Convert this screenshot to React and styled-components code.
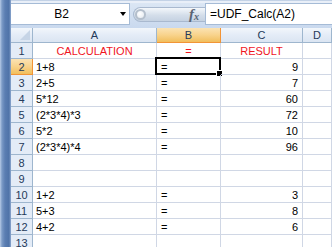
import React from 'react';
import styled, { createGlobalStyle } from 'styled-components';

const GlobalStyle = createGlobalStyle`
  html, body {
    margin: 0;
    padding: 0;
    background: #ffffff;
  }
  body {
    font-family: "Liberation Sans", Arial, sans-serif;
  }
`;

const COLS = ['A', 'B', 'C', 'D'];

const rows = [
  { a: 'CALCULATION', b: '=', c: 'RESULT', title: true },
  { a: '1+8', b: '=', c: '9' },
  { a: '2+5', b: '=', c: '7' },
  { a: '5*12', b: '=', c: '60' },
  { a: '(2*3*4)*3', b: '=', c: '72' },
  { a: '5*2', b: '=', c: '10' },
  { a: '(2*3*4)*4', b: '=', c: '96' },
  { a: '', b: '', c: '' },
  { a: '', b: '', c: '' },
  { a: '1+2', b: '=', c: '3' },
  { a: '5+3', b: '=', c: '8' },
  { a: '4+2', b: '=', c: '6' },
  { a: '', b: '', c: '' },
];

const App = () => {
  return (
    <>
      <GlobalStyle />
      <Window>
        <Frame />
        <Main>
          <FormulaBar>
            <NameBox>
              <NameText>B2</NameText>
              <DropArrow />
            </NameBox>
            <FxPill>
              <Knob />
              <Fx>
                f<sub>x</sub>
              </Fx>
            </FxPill>
            <FormulaInput>=UDF_Calc(A2)</FormulaInput>
          </FormulaBar>
          <Sheet>
            <Corner>
              <CornerTri />
            </Corner>
            {COLS.map((c) => (
              <ColHead key={c} active={c === 'B'}>
                {c}
              </ColHead>
            ))}
            {rows.map((r, i) => {
              const n = i + 1;
              return (
                <React.Fragment key={n}>
                  <RowHead active={n === 2}>{n}</RowHead>
                  <Cell align={r.title ? 'center' : 'left'} red={r.title}>
                    {r.a}
                  </Cell>
                  <Cell align={r.title ? 'center' : 'left'} red={r.title} pad="4px">
                    {r.b}
                    {n === 2 && (
                      <Selection>
                        <Handle />
                      </Selection>
                    )}
                  </Cell>
                  <Cell align={r.title ? 'center' : 'right'} red={r.title}>
                    {r.c}
                  </Cell>
                  <Cell />
                </React.Fragment>
              );
            })}
          </Sheet>
        </Main>
      </Window>
    </>
  );
};

const Window = styled.div`
  width: 332px;
  height: 247px;
  display: flex;
  overflow: hidden;
  background: #ffffff;
`;

const Frame = styled.div`
  width: 11px;
  flex-shrink: 0;
  background: linear-gradient(
    to right,
    #b7cbe6 0px,
    #7b9ac6 2px,
    #5b7eb2 5px,
    #4f73a8 9px,
    #8ea9d0 11px
  );
`;

const Main = styled.div`
  flex: 1;
  display: flex;
  flex-direction: column;
  min-width: 0;
`;

const FormulaBar = styled.div`
  height: 28px;
  box-sizing: border-box;
  padding: 2px 0 3px 0;
  display: flex;
  align-items: stretch;
  background: linear-gradient(to bottom, #e9eff8 0, #e9eff8 2px, #dbe6f4 2px, #c9d9ee 100%);
  border-top: 1px solid #c3d2e6;
`;

const NameBox = styled.div`
  width: 119px;
  box-sizing: border-box;
  background: #ffffff;
  border: 1px solid #a5bbd6;
  border-left: none;
  display: flex;
  align-items: center;
  position: relative;
`;

const NameText = styled.span`
  flex: 1;
  text-align: center;
  font-size: 12px;
  color: #000;
  padding-right: 8px;
`;

const DropArrow = styled.span`
  width: 0;
  height: 0;
  margin-right: 3px;
  border-left: 3.5px solid transparent;
  border-right: 3.5px solid transparent;
  border-top: 4px solid #000;
`;

const FxPill = styled.div`
  width: 72px;
  margin: 4px 0 3px 3px;
  box-sizing: border-box;
  border: 1px solid #a9b9cf;
  border-right: none;
  border-radius: 8px 0 0 8px;
  background: linear-gradient(to bottom, #f4f7fb, #d4deea 55%, #c5d2e2);
  display: flex;
  align-items: center;
`;

const Knob = styled.div`
  width: 11px;
  height: 11px;
  margin-left: 1px;
  border-radius: 50%;
  box-sizing: border-box;
  border: 2px solid #b4bfcc;
  background: radial-gradient(circle at 40% 40%, #ffffff, #e2e8ef);
`;

const Fx = styled.span`
  margin-left: auto;
  margin-right: 6px;
  font-family: "Liberation Serif", "Times New Roman", serif;
  font-style: italic;
  font-weight: bold;
  font-size: 15px;
  color: #5a6473;
  line-height: 1;

  sub {
    font-size: 10px;
    vertical-align: -1px;
  }
`;

const FormulaInput = styled.div`
  flex: 1;
  background: #ffffff;
  border: 1px solid #a5bbd6;
  border-right: none;
  display: flex;
  align-items: center;
  padding-left: 4px;
  font-size: 12px;
  color: #000;
  white-space: nowrap;
`;

const Sheet = styled.div`
  display: grid;
  grid-template-columns: 22px 124px 64px 82px 1fr;
  grid-template-rows: 15px repeat(13, 16px);
  font-size: 11px;
`;

const headBg = `linear-gradient(to bottom, #f2f6fb, #e4ecf7 50%, #dbe5f2)`;
const activeBg = `linear-gradient(to bottom, #fbe3b4, #f8d38c 50%, #f1be5c)`;

const Corner = styled.div`
  box-sizing: border-box;
  background: ${headBg};
  border-right: 1px solid #9eb6ce;
  border-bottom: 1px solid #9eb6ce;
  position: relative;
`;

const CornerTri = styled.div`
  position: absolute;
  right: 2px;
  bottom: 2px;
  width: 0;
  height: 0;
  border-left: 10px solid transparent;
  border-bottom: 10px solid #c6d4e6;
`;

const ColHead = styled.div`
  box-sizing: border-box;
  display: flex;
  align-items: center;
  justify-content: center;
  background: ${(p) => (p.active ? activeBg : headBg)};
  border-right: 1px solid ${(p) => (p.active ? '#f29436' : '#9eb6ce')};
  border-bottom: 1px solid ${(p) => (p.active ? '#f29436' : '#9eb6ce')};
  color: #243a5a;
`;

const RowHead = styled.div`
  box-sizing: border-box;
  display: flex;
  align-items: center;
  justify-content: center;
  background: ${(p) => (p.active ? activeBg : '#e4ecf7')};
  border-right: 1px solid ${(p) => (p.active ? '#f29436' : '#9eb6ce')};
  border-bottom: 1px solid ${(p) => (p.active ? '#f29436' : '#9eb6ce')};
  color: #243a5a;
`;

const Cell = styled.div`
  box-sizing: border-box;
  position: relative;
  display: flex;
  align-items: center;
  justify-content: ${(p) =>
    p.align === 'center' ? 'center' : p.align === 'right' ? 'flex-end' : 'flex-start'};
  padding: 0 ${(p) => (p.align === 'right' ? '4px' : '0')} 0
    ${(p) => (p.align === 'left' ? p.pad || '3px' : '0')};
  border-right: 1px solid #d0d7e5;
  border-bottom: 1px solid #d0d7e5;
  color: ${(p) => (p.red ? '#f0141e' : '#000000')};
  white-space: nowrap;
  overflow: visible;
`;

const Selection = styled.div`
  position: absolute;
  left: -2px;
  top: -2px;
  right: -1px;
  bottom: -1px;
  border: 2px solid #000;
  pointer-events: none;
`;

const Handle = styled.div`
  position: absolute;
  right: -4px;
  bottom: -4px;
  width: 5px;
  height: 5px;
  background: #000;
  border: 1px solid #fff;
`;

export default App;
